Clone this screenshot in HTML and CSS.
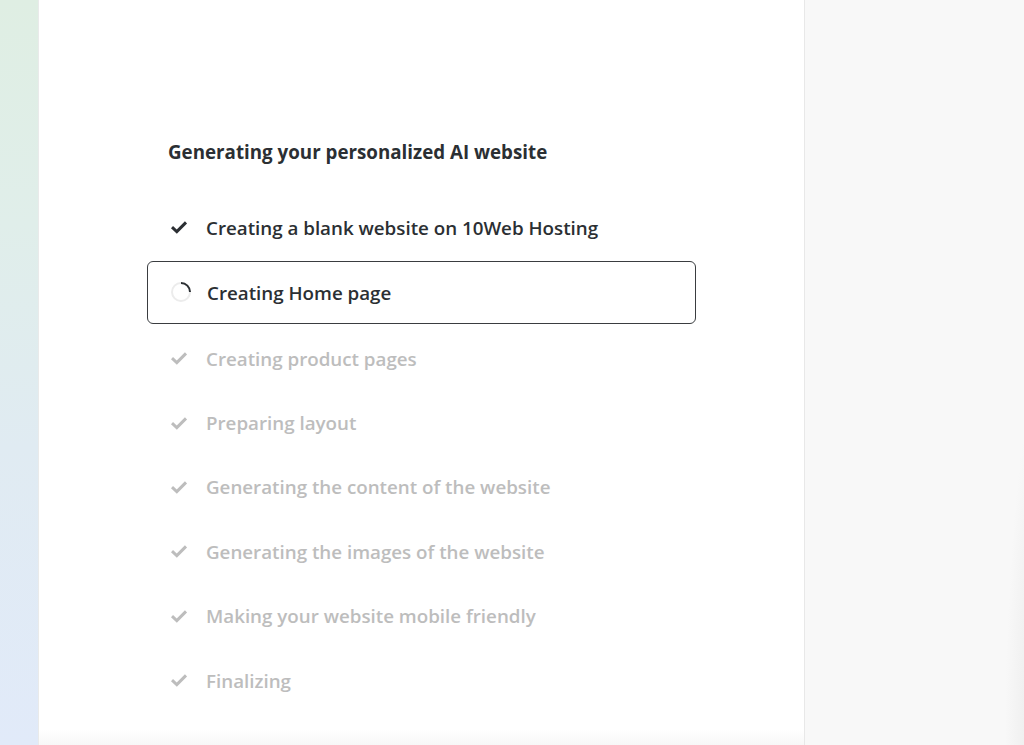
FILE: index.html
```html
<!DOCTYPE html>
<html>
<head>
<meta charset="utf-8">
<link rel="stylesheet" href="styles.css">
</head>
<body>
<div class="page">
  <div class="strip"></div>
  <main class="main">
    <h1 class="title">Generating your personalized AI website</h1>
    <ul class="steps">
      <li class="step done">
        <svg class="check" viewBox="0 0 18 14"><path d="M2 7.2 L6.8 11.6 L16 2.4" fill="none" stroke="currentColor" stroke-width="3"/></svg>
        <span>Creating a blank website on 10Web Hosting</span>
      </li>
      <li class="step active">
        <svg class="spinner" viewBox="0 0 22 22"><circle cx="11" cy="11" r="9" fill="none" stroke="#ececec" stroke-width="2"/><path d="M11 2 A9 9 0 0 1 20 11" fill="none" stroke="#2b2f33" stroke-width="2"/></svg>
        <span>Creating Home page</span>
      </li>
      <li class="step pending">
        <svg class="check" viewBox="0 0 18 14"><path d="M2 7.2 L6.8 11.6 L16 2.4" fill="none" stroke="currentColor" stroke-width="3"/></svg>
        <span>Creating product pages</span>
      </li>
      <li class="step pending">
        <svg class="check" viewBox="0 0 18 14"><path d="M2 7.2 L6.8 11.6 L16 2.4" fill="none" stroke="currentColor" stroke-width="3"/></svg>
        <span>Preparing layout</span>
      </li>
      <li class="step pending">
        <svg class="check" viewBox="0 0 18 14"><path d="M2 7.2 L6.8 11.6 L16 2.4" fill="none" stroke="currentColor" stroke-width="3"/></svg>
        <span>Generating the content of the website</span>
      </li>
      <li class="step pending">
        <svg class="check" viewBox="0 0 18 14"><path d="M2 7.2 L6.8 11.6 L16 2.4" fill="none" stroke="currentColor" stroke-width="3"/></svg>
        <span>Generating the images of the website</span>
      </li>
      <li class="step pending">
        <svg class="check" viewBox="0 0 18 14"><path d="M2 7.2 L6.8 11.6 L16 2.4" fill="none" stroke="currentColor" stroke-width="3"/></svg>
        <span>Making your website mobile friendly</span>
      </li>
      <li class="step pending">
        <svg class="check" viewBox="0 0 18 14"><path d="M2 7.2 L6.8 11.6 L16 2.4" fill="none" stroke="currentColor" stroke-width="3"/></svg>
        <span>Finalizing</span>
      </li>
    </ul>
  </main>
  <aside class="side"></aside>
</div>
</body>
</html>
```
FILE: styles.css
```css
* { box-sizing: border-box; }
html, body { margin: 0; padding: 0; }
body {
  font-family: "Open Sans", "Noto Sans", sans-serif;
  color: #2b2f33;
  background: #fff;
}
.page {
  display: flex;
  width: 1024px;
  height: 745px;
  overflow: hidden;
}
.strip {
  width: 39px;
  flex: none;
  background: linear-gradient(180deg, #dfeee3 0%, #e0eeea 30%, #e0ebf2 60%, #e1eaf9 100%);
  border-right: 1px solid #e9eaea;
}
.main {
  flex: none;
  width: 765px;
  padding: 140px 0 0 129px;
  background: linear-gradient(180deg, #fff 0%, #fff 98%, #f7f7f7 100%);
}
.title {
  margin: 0;
  font-size: 18.75px;
  line-height: 24px;
  font-weight: 700;
  color: #2b2f33;
}
.steps {
  list-style: none;
  margin: 30px 0 0;
  padding: 0;
}
.step {
  display: flex;
  align-items: center;
  height: 64.4px;
  font-size: 18.75px;
  font-weight: 600;
  width: 549px;
}
.step .check {
  width: 18px;
  height: 14px;
  margin-left: 2px;
  margin-right: 18px;
  flex: none;
}
.done { color: #2b2f33; height: 66px; margin-bottom: 0.6px; }
.pending { color: #bdbdbd; }
.active {
  height: 63px;
  margin: 0 0 2.4px -21px;
  padding-left: 22px;
  border: 1.5px solid #3a3d40;
  border-radius: 6px;
  color: #2b2f33;
}
.spinner {
  width: 22px;
  height: 22px;
  margin-right: 15px;
  flex: none;
}
.side {
  flex: 1;
  border-left: 1px solid #e8e8e8;
  background:
    radial-gradient(ellipse 70px 460px at 1075px 745px, rgba(255,255,255,1) 0%, rgba(255,255,255,1) 55%, rgba(238,238,238,0.9) 70%, rgba(248,248,248,0) 100%),
    #f8f8f8;
  background-attachment: fixed;
}
```
